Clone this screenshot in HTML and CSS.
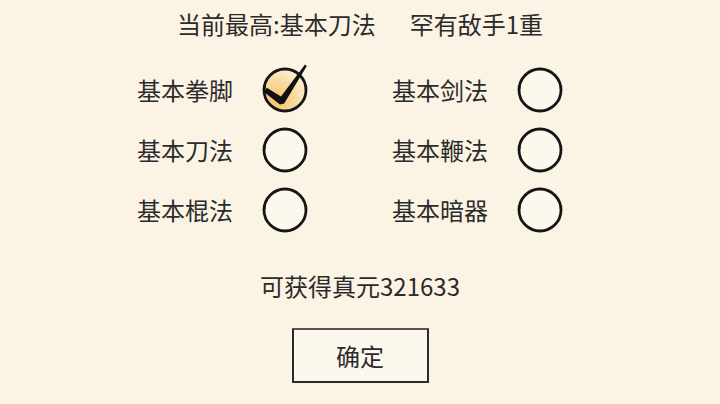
FILE: index.html
```html
<!DOCTYPE html>
<html lang="zh-CN">
<head>
<meta charset="utf-8">
<title>修炼</title>
<link rel="stylesheet" href="styles.css">
</head>
<body>
<main class="panel">
  <header class="title">
    <span>当前最高:基本刀法</span>
    <span>罕有敌手1重</span>
  </header>

  <section class="options">
    <div class="option">
      <span class="label">基本拳脚</span>
      <svg class="box" viewBox="0 0 46 46" aria-hidden="true">
        <defs>
          <radialGradient id="tick-fill" cx="0.3" cy="0.75" r="0.85">
            <stop offset="0" stop-color="#f6c66c"/>
            <stop offset="0.55" stop-color="#f9dba0"/>
            <stop offset="1" stop-color="#fdf3e2"/>
          </radialGradient>
        </defs>
        <circle cx="23" cy="23" r="21" fill="url(#tick-fill)" stroke="#151515" stroke-width="2.8"/>
        <path d="M2.4 22.4 A21 21 0 0 1 14 4" fill="none" stroke="#151515" stroke-width="1.8"/>
        <!-- brush tick: heavy at the turn, thinning toward the tail -->
        <path d="M1.8 25 L4.8 20.8 L19 29.4 L43 -2.4 L44.8 -1 L22.2 36.6 L18 37.4 Z" fill="#111"/>
      </svg>
    </div>
    <div class="option">
      <span class="label">基本剑法</span>
      <svg class="box" viewBox="0 0 46 46" aria-hidden="true">
        <circle cx="23" cy="23" r="21" fill="#fdf8ee" stroke="#151515" stroke-width="2.8"/>
        <path d="M2.4 22.4 A21 21 0 0 1 14 4" fill="none" stroke="#151515" stroke-width="1.8"/>
      </svg>
    </div>
    <div class="option">
      <span class="label">基本刀法</span>
      <svg class="box" viewBox="0 0 46 46" aria-hidden="true">
        <circle cx="23" cy="23" r="21" fill="#fdf8ee" stroke="#151515" stroke-width="2.8"/>
        <path d="M2.4 22.4 A21 21 0 0 1 14 4" fill="none" stroke="#151515" stroke-width="1.8"/>
      </svg>
    </div>
    <div class="option">
      <span class="label">基本鞭法</span>
      <svg class="box" viewBox="0 0 46 46" aria-hidden="true">
        <circle cx="23" cy="23" r="21" fill="#fdf8ee" stroke="#151515" stroke-width="2.8"/>
        <path d="M2.4 22.4 A21 21 0 0 1 14 4" fill="none" stroke="#151515" stroke-width="1.8"/>
      </svg>
    </div>
    <div class="option">
      <span class="label">基本棍法</span>
      <svg class="box" viewBox="0 0 46 46" aria-hidden="true">
        <circle cx="23" cy="23" r="21" fill="#fdf8ee" stroke="#151515" stroke-width="2.8"/>
        <path d="M2.4 22.4 A21 21 0 0 1 14 4" fill="none" stroke="#151515" stroke-width="1.8"/>
      </svg>
    </div>
    <div class="option">
      <span class="label">基本暗器</span>
      <svg class="box" viewBox="0 0 46 46" aria-hidden="true">
        <circle cx="23" cy="23" r="21" fill="#fdf8ee" stroke="#151515" stroke-width="2.8"/>
        <path d="M2.4 22.4 A21 21 0 0 1 14 4" fill="none" stroke="#151515" stroke-width="1.8"/>
      </svg>
    </div>
  </section>

  <p class="reward">可获得真元321633</p>

  <div class="actions">
    <button class="confirm" type="button">确定</button>
  </div>
</main>
</body>
</html>
```

FILE: styles.css
```css
html, body {
  margin: 0;
  padding: 0;
}

body {
  width: 720px;
  height: 404px;
  overflow: hidden;
  background: #fbf3e3;
  color: #2b2b2b;
  font-family: "Noto Sans CJK SC", "Noto Sans", sans-serif;
  font-size: 24px;
}

.panel {
  display: flex;
  flex-direction: column;
  align-items: center;
}

.title {
  display: flex;
  gap: 34px;
  padding-top: 9px;
  line-height: 30px;
  height: 30px;
}

.options {
  display: grid;
  grid-template-columns: 170px 170px;
  grid-auto-rows: 60px;
  column-gap: 85px;
  margin-top: 21px;
  padding-right: 21px;
}

.option {
  display: flex;
  align-items: center;
  gap: 29px;
}

.label {
  width: 96px;
  line-height: 30px;
  white-space: nowrap;
}

.box {
  width: 46px;
  height: 46px;
  overflow: visible;
  flex: none;
}

.reward {
  margin: 31px 0 0;
  line-height: 30px;
}

.actions {
  margin-top: 27px;
}

.confirm {
  width: 137px;
  height: 55px;
  box-sizing: border-box;
  border: 2px solid #2a2a2a;
  border-top-color: #555;
  background: #fdf8ee;
  color: #2b2b2b;
  font-family: inherit;
  font-size: 24px;
  padding: 0;
  border-radius: 1px;
}
```
